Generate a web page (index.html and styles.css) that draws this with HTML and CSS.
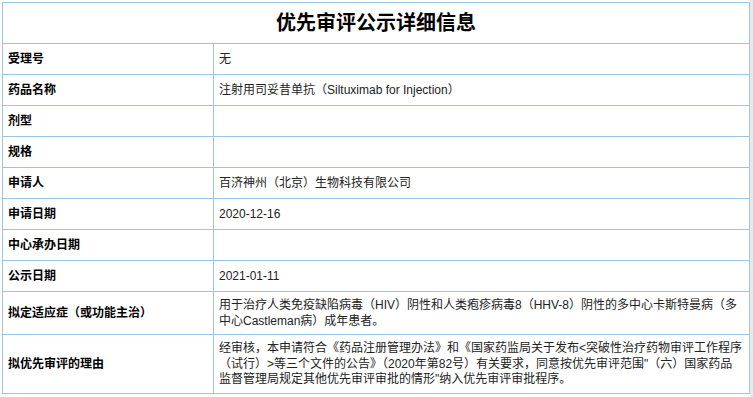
FILE: index.html
```html
<!DOCTYPE html>
<html lang="zh-CN">
<head>
<meta charset="utf-8">
<title>优先审评公示详细信息</title>
<link rel="stylesheet" href="styles.css">
</head>
<body>
<div class="page">
<table class="info">
  <colgroup><col class="c-label"><col class="c-value"></colgroup>
  <thead>
    <tr><th colspan="2" class="title">优先审评公示详细信息</th></tr>
  </thead>
  <tbody>
    <tr><td class="label">受理号</td><td class="value">无</td></tr>
    <tr><td class="label">药品名称</td><td class="value">注射用司妥昔单抗（Siltuximab for Injection）</td></tr>
    <tr><td class="label">剂型</td><td class="value"></td></tr>
    <tr><td class="label">规格</td><td class="value"></td></tr>
    <tr><td class="label">申请人</td><td class="value">百济神州（北京）生物科技有限公司</td></tr>
    <tr><td class="label">申请日期</td><td class="value">2020-12-16</td></tr>
    <tr><td class="label">中心承办日期</td><td class="value"></td></tr>
    <tr><td class="label">公示日期</td><td class="value">2021-01-11</td></tr>
    <tr><td class="label">拟定适应症（或功能主治）</td><td class="value">用于治疗人类免疫缺陷病毒（HIV）阴性和人类疱疹病毒8（HHV-8）阴性的多中心卡斯特曼病（多中心Castleman病）成年患者。</td></tr>
    <tr><td class="label">拟优先审评的理由</td><td class="value">经审核，本申请符合《药品注册管理办法》和《国家药监局关于发布&lt;突破性治疗药物审评工作程序（试行）&gt;等三个文件的公告》（2020年第82号）有关要求，同意按优先审评范围"（六）国家药品监督管理局规定其他优先审评审批的情形"纳入优先审评审批程序。</td></tr>
  </tbody>
</table>
</div>
</body>
</html>
```

FILE: styles.css
```css
html {
  background: linear-gradient(to right, #ffffff 750px, #e9e9e9 750px);
}
body {
  margin: 0;
  font-family: "Liberation Sans", "Noto Sans CJK SC", sans-serif;
  font-size: 12px;
  color: #222;
}
.page {
  padding: 2px 0 0 2px;
}
.info {
  border-collapse: collapse;
  width: 748px;
  table-layout: fixed;
}
.c-label { width: 211px; }
.info th,
.info td {
  border: 1px solid #9dc3e6;
}
.title {
  height: 40px;
  padding: 0;
  font-size: 20px;
  font-weight: bold;
  color: #000;
  text-align: center;
  vertical-align: middle;
  line-height: 24px;
}
.info td {
  height: 31px;
  padding: 6px 5px 5px 5px;
  line-height: 15.6px;
  vertical-align: middle;
  text-align: left;
  box-sizing: border-box;
}
.label {
  font-weight: bold;
  color: #000;
}
.value {
  color: #222;
}
```
